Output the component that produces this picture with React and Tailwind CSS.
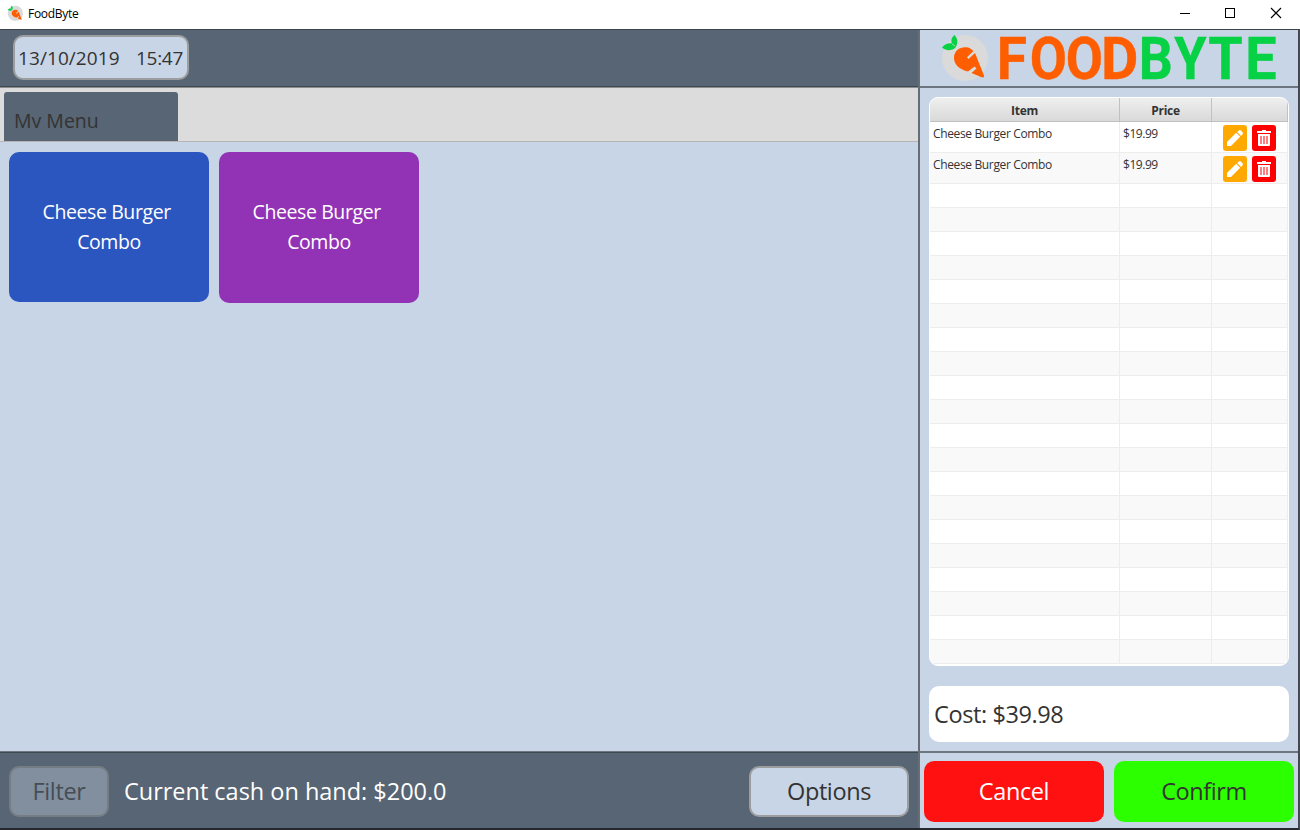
import React from "react";

const LOGO = [
  ["F", 996.7, 0.93, "#ff5e00"],
  ["O", 1029.7, 0.91, "#ff5e00"],
  ["O", 1065.7, 0.91, "#ff5e00"],
  ["D", 1100.9, 0.97, "#ff5e00"],
  ["B", 1138.7, 0.9, "#07d145"],
  ["Y", 1174.3, 0.88, "#07d145"],
  ["T", 1208.3, 0.94, "#07d145"],
  ["E", 1245.2, 0.94, "#07d145"],
];

function Carrot({ className }) {
  return (
    <svg className={className} viewBox="0 0 48 48" fill="none">
      <circle cx="25" cy="25" r="23" fill="#dadada" />
      <path d="M2 14.5C5 10.5 9 10 12 10.5C10.5 7 12 4 14.5 2C17 5 18.5 8 16.5 12.5C15 17.5 7 19 2 14.5Z" fill="#07d145" />
      <path d="M12 11L15 13" stroke="#dadada" strokeWidth=".7" />
      <path d="M14 25C14 17 21 13 28 14.5C30 15 32 16.5 33.5 18L27 24.3L28.5 26L35 20L44 42.5C44.5 44.5 43 45 41 44L31.5 40L36.5 35.5L34.5 33.5L28 38.5C20 36.5 14 32 14 25Z" fill="#ff5e00" />
    </svg>
  );
}

function Wordmark() {
  return (
    <svg width="280" height="56" viewBox="996 30 280 56" className="overflow-visible font-[Roboto,sans-serif]">
      {LOGO.map(([c, x, s, fill], i) => (
        <text key={i} transform={`translate(${x} 79) scale(${s} 1)`} fontSize="59.3" fontWeight="700" fill={fill} stroke={fill} strokeWidth="0.4">{c}</text>
      ))}
    </svg>
  );
}

function EditIcon() {
  return (
    <svg width="24" height="26" viewBox="0 0 24 26" fill="white">
      <path d="M4 17L13.2 7.8L17.2 11.8L8 21H4ZM14.1 6.9L15.8 5.4Q16.8 4.6 17.8 5.4L19.6 7.2Q20.4 8.2 19.6 9.2L18.1 10.9Z" />
    </svg>
  );
}

function TrashIcon() {
  return (
    <svg width="24" height="26" viewBox="0 0 24 26">
      <path d="M5 6H10V5H14V6H19V8H5ZM6 9H18V20.3L17.3 21H6.7L6 20.3Z" fill="white" />
      <path d="M8 11H10V19H8ZM11 11H13V19H11ZM14 11H16V19H14Z" fill="#ff8080" />
    </svg>
  );
}

function TableRow({ index, item, price }) {
  const odd = index % 2 === 1;
  return (
    <div className={`flex shrink-0 border-b border-[#ededed] text-[12px] leading-[16px] text-[#333] ${item ? "h-[31px]" : "h-6"} ${odd ? "bg-[#f9f9f9]" : "bg-white"}`}>
      <div className="w-[190px] border-r border-[#ededed] pl-[3px] pt-[4px] tracking-[-0.36px]">{item}</div>
      <div className="w-[92px] border-r border-[#ededed] pl-[3px] pt-[4px] tracking-[-0.45px]">{price}</div>
      <div className="flex w-[76px] gap-[5px] border-r border-[#ededed] pl-[11px] pt-[3px]">
        {item && (
          <>
            <button className="h-[26px] w-6 rounded-[3px] bg-[#ffa800]"><EditIcon /></button>
            <button className="h-[26px] w-6 rounded-[3px] bg-[#ff0000]"><TrashIcon /></button>
          </>
        )}
      </div>
    </div>
  );
}

const ORDER = [
  { item: "Cheese Burger Combo", price: "$19.99" },
  { item: "Cheese Burger Combo", price: "$19.99" },
  ...Array.from({ length: 20 }, () => ({})),
];

function TitleBar() {
  return (
    <header className="flex h-[29px] shrink-0 items-center justify-between bg-white pl-[7px]">
      <div className="flex items-center gap-[5px] text-[12px] leading-4 text-black">
        <Carrot className="-mt-[3px] h-4 w-4" />
        <span className="-mt-px tracking-[-0.3px]">FoodByte</span>
      </div>
      <svg width="140" height="29" viewBox="1160 0 140 29" fill="none" stroke="black" shapeRendering="crispEdges">
        <path d="M1180 13.5H1190M1225.5 8.5H1234.5V17.5H1225.5Z" />
        <path d="M1271 8L1281 18M1281 8L1271 18" shapeRendering="auto" strokeWidth="1.15" />
      </svg>
    </header>
  );
}

function MenuTile({ className }) {
  return (
    <button className={`flex w-[200px] items-start justify-center rounded-[10px] pt-[45px] text-center text-[19.5px] leading-[30px] tracking-[-0.4px] text-white ${className}`}>
      <span>Cheese Burger&nbsp;<br />Combo</span>
    </button>
  );
}

export default function App() {
  return (
    <div className="flex h-[830px] w-[1300px] flex-col overflow-hidden bg-[#c8d5e6] font-['Open_Sans','Noto_Sans',sans-serif]">
      <TitleBar />
      <div className="flex h-[801px] border-b-2 border-r-2 border-b-[#25282e] border-r-[#45494f] border-t border-t-[#3a454b]">
        <main className="flex w-[918px] flex-col">
          <div className="flex h-[56px] shrink-0 items-start bg-[#586574] pl-[13px] pt-[5px]">
            <div className="flex h-[45px] w-[176px] items-center justify-between rounded-[10px] border-2 border-[#9c9d9e] bg-[#c8d5e6] pl-[3px] pr-[4px] pt-px text-[19px] text-[#333]">
              <span className="tracking-[0.08px]">13/10/2019</span>
              <span className="tracking-[-0.3px]">15:47</span>
            </div>
          </div>
          <div className="h-[2px] shrink-0 border-b border-b-[#8a8c8d] bg-[#3d4a50]" />
          <div className="flex h-[54px] shrink-0 items-end border-b border-[#b5b5b5] bg-[#dcdcdc] pl-[4px]">
            <div className="h-[49px] w-[174px] rounded-t-[3px] bg-[#586574] pl-[10px] pt-[14px] text-[19.5px] leading-[30px] text-[#333]">
              <div className="h-[22px] overflow-hidden">My Menu</div>
            </div>
          </div>
          <div className="flex flex-1 items-start gap-[10px] pl-[9px] pt-[10px]">
            <MenuTile className="h-[150px] bg-[#2b55bf]" />
            <MenuTile className="h-[151px] bg-[#9232b5]" />
          </div>
          <div className="h-[2px] shrink-0 border-t border-t-[#6d757e] bg-[#3d4a50]" />
          <footer className="flex h-[75px] shrink-0 items-center bg-[#586574] pl-[9px] pr-[9px] text-[23.5px]">
            <button className="mt-px h-[51px] w-[100px] rounded-[10px] border-2 border-[#757d84] bg-[#818f9f] pt-[2px] tracking-[-0.4px] text-[#454d56]">Filter</button>
            <span className="ml-[15px] mt-[3px] flex-1 tracking-[-0.02px] text-white">Current cash on hand: $200.0</span>
            <button className="mt-px h-[51px] w-[160px] rounded-[10px] border-2 border-[#9c9d9e] bg-[#c8d5e6] pt-[2px] tracking-[-0.4px] text-[#333]">Options</button>
          </footer>
        </main>
        <div className="w-[2px] shrink-0 bg-[#666d75]" />
        <aside className="flex w-[378px] flex-col">
          <div className="flex h-[56px] shrink-0 items-start pl-[20px]">
            <Carrot className="mt-[3px] h-12 w-12" />
            <div className="ml-[8px]"><Wordmark /></div>
          </div>
          <div className="h-[2px] shrink-0 bg-[#6d757e]" />
          <div className="ml-[9px] mt-[9px] flex h-[569px] w-[360px] shrink-0 flex-col overflow-hidden rounded-[9px] border border-white bg-white">
            <div className="flex h-6 shrink-0 border-b border-[#c1c1c1] bg-linear-to-b from-[#efefef] to-[#d9d9d9] text-center text-[12px] font-bold leading-[25px] text-[#333]">
              <div className="w-[190px] border-r border-[#c1c1c1] tracking-[-0.3px]">Item</div>
              <div className="w-[92px] border-r border-[#c1c1c1] tracking-[-0.3px]">Price</div>
              <div className="w-[76px] border-r border-[#c1c1c1]" />
            </div>
            {ORDER.map((row, i) => <TableRow key={i} index={i} {...row} />)}
          </div>
          <div className="ml-[9px] mt-[20px] flex h-[56px] w-[360px] shrink-0 items-center rounded-[10px] bg-white pl-[5px] pt-[2px] text-[23.5px] tracking-[-0.4px] text-[#333]">Cost: $39.98</div>
          <div className="mt-[9px] h-[2px] shrink-0 bg-[#6d757e]" />
          <div className="flex gap-[10px] pl-[4px] pt-[8px] text-[23.5px] tracking-[-0.4px]">
            <button className="h-[61px] w-[180px] rounded-[10px] bg-[#ff1111] pt-px text-white">Cancel</button>
            <button className="h-[61px] w-[180px] rounded-[10px] bg-[#2bff00] pt-px text-[#333]">Confirm</button>
          </div>
        </aside>
      </div>
    </div>
  );
}
